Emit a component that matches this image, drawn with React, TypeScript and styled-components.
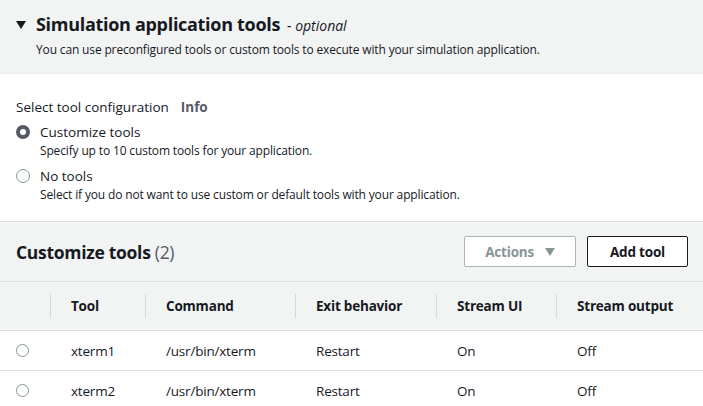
import React from "react";
import styled, { createGlobalStyle } from "styled-components";

const Global = createGlobalStyle`
  html, body { margin: 0; padding: 0; background: #ffffff; }
  body { font-family: "Open Sans", "Noto Sans", Arial, sans-serif; color: #16191f; }
  * { box-sizing: border-box; }
`;

const Page = styled.div`
  width: 703px;
  height: 406px;
  overflow: hidden;
  background: #fff;
`;

const TopHeader = styled.div`
  background: #f2f3f3;
  height: 74px;
  padding: 11px 16px 0 16px;
  border-bottom: 1px solid #eaeded;
`;

const TitleRow = styled.div`
  display: flex;
  align-items: center;
  gap: 10px;
`;

const Caret = styled.svg`
  width: 10px;
  height: 8px;
  flex: none;
`;

const Title = styled.h2`
  margin: 0;
  font-size: 18px;
  font-weight: 700;
  letter-spacing: -0.3px;
  line-height: 26px;
`;

const Optional = styled.span`
  font-size: 14px;
  font-weight: 400;
  font-style: italic;
  margin-left: 7px;
  letter-spacing: 0;
`;

const Description = styled.p`
  margin: 3px 0 0 20px;
  font-size: 12px;
  line-height: 16px;
  letter-spacing: -0.15px;
`;

const FormArea = styled.div`
  height: 147px;
  padding: 23px 16px 0 16px;
`;

const Label = styled.div`
  font-size: 13.5px;
  line-height: 20px;
  display: flex;
  gap: 12px;
`;

const InfoLink = styled.span`
  font-weight: 700;
  color: #545b64;
`;

const Options = styled.div`
  display: flex;
  flex-direction: column;
  gap: 7px;
  margin-top: 5px;
`;

const Option = styled.div`
  display: grid;
  grid-template-columns: 24px 1fr;
  row-gap: 1px;
`;

const RadioCircle = styled.span<{ $checked?: boolean }>`
  width: 14px;
  height: 14px;
  border-radius: 50%;
  margin-top: 3px;
  border: ${(p) => (p.$checked ? "4px solid #545b64" : "1px solid #879596")};
  background: #fff;
  display: inline-block;
`;

const OptionLabel = styled.div`
  font-size: 13.5px;
  line-height: 20px;
`;

const OptionDesc = styled.div`
  grid-column: 2;
  font-size: 12px;
  line-height: 16px;
  letter-spacing: -0.15px;
`;

const TableHeader = styled.div`
  background: #f2f3f3;
  border-top: 1px solid #dcdfdf;
  border-bottom: 1px solid #dcdfdf;
  height: 61px;
  display: flex;
  align-items: center;
  justify-content: space-between;
  padding: 0 15px 0 16px;
`;

const TableTitle = styled.h3`
  margin: 0;
  font-size: 17.5px;
  font-weight: 700;
  letter-spacing: -0.3px;
`;

const Count = styled.span`
  font-weight: 400;
  color: #545b64;
`;

const Buttons = styled.div`
  display: flex;
  gap: 11px;
`;

const Button = styled.button<{ $disabled?: boolean }>`
  height: 31px;
  font-family: inherit;
  font-size: 13.5px;
  font-weight: 700;
  background: #fff;
  border: 1px solid ${(p) => (p.$disabled ? "#aab7b8" : "#16191f")};
  color: ${(p) => (p.$disabled ? "#879596" : "#16191f")};
  border-radius: 2px;
  padding: 0 ${(p) => (p.$disabled ? "20px" : "22px")};
  display: flex;
  align-items: center;
  gap: 11px;
  letter-spacing: -0.2px;
`;

const Table = styled.div`
  display: grid;
  grid-template-columns: 50px 95px 150px 141px 120px 147px;
`;

const HeadCell = styled.div<{ $sep?: boolean }>`
  background: #f2f3f3;
  height: 49px;
  border-bottom: 1px solid #dcdfdf;
  display: flex;
  align-items: center;
  padding-left: 21px;
  font-size: 13.5px;
  font-weight: 700;
  letter-spacing: -0.2px;
  position: relative;
  &::before {
    content: "";
    display: ${(p) => (p.$sep ? "block" : "none")};
    position: absolute;
    left: 0;
    top: 12px;
    bottom: 12px;
    width: 1px;
    background: #d5dbdb;
  }
`;

const Cell = styled.div`
  height: 40px;
  border-bottom: 1px solid #dcdfdf;
  display: flex;
  align-items: center;
  padding-left: 21px;
  font-size: 13.5px;
  letter-spacing: -0.2px;
`;

const SelectCell = styled(Cell)`
  padding-left: 16px;
`;

const RowRadio = styled.span`
  width: 13px;
  height: 13px;
  border-radius: 50%;
  border: 1px solid #879596;
  display: inline-block;
`;

const rows = [
  { tool: "xterm1", cmd: "/usr/bin/xterm", exit: "Restart", ui: "On", out: "Off" },
  { tool: "xterm2", cmd: "/usr/bin/xterm", exit: "Restart", ui: "On", out: "Off" },
];

const headers = ["Tool", "Command", "Exit behavior", "Stream UI", "Stream output"];

export default function App() {
  return (
    <Page>
      <Global />
      <TopHeader>
        <TitleRow>
          <Caret viewBox="0 0 10 8">
            <path d="M0 0 H10 L5 8 Z" fill="#16191f" />
          </Caret>
          <Title>
            Simulation application tools<Optional>- optional</Optional>
          </Title>
        </TitleRow>
        <Description>
          You can use preconfigured tools or custom tools to execute with your simulation application.
        </Description>
      </TopHeader>
      <FormArea>
        <Label>
          Select tool configuration <InfoLink>Info</InfoLink>
        </Label>
        <Options>
          <Option>
            <RadioCircle $checked />
            <OptionLabel>Customize tools</OptionLabel>
            <OptionDesc>Specify up to 10 custom tools for your application.</OptionDesc>
          </Option>
          <Option>
            <RadioCircle />
            <OptionLabel>No tools</OptionLabel>
            <OptionDesc>Select if you do not want to use custom or default tools with your application.</OptionDesc>
          </Option>
        </Options>
      </FormArea>
      <TableHeader>
        <TableTitle>
          Customize tools <Count>(2)</Count>
        </TableTitle>
        <Buttons>
          <Button $disabled>
            Actions
            <svg width="10" height="8" viewBox="0 0 10 8">
              <path d="M0 0 H10 L5 8 Z" fill="#879596" />
            </svg>
          </Button>
          <Button>Add tool</Button>
        </Buttons>
      </TableHeader>
      <Table>
        <HeadCell />
        {headers.map((h) => (
          <HeadCell key={h} $sep>
            {h}
          </HeadCell>
        ))}
        {rows.map((r) => (
          <React.Fragment key={r.tool}>
            <SelectCell>
              <RowRadio />
            </SelectCell>
            <Cell>{r.tool}</Cell>
            <Cell>{r.cmd}</Cell>
            <Cell>{r.exit}</Cell>
            <Cell>{r.ui}</Cell>
            <Cell>{r.out}</Cell>
          </React.Fragment>
        ))}
      </Table>
    </Page>
  );
}
